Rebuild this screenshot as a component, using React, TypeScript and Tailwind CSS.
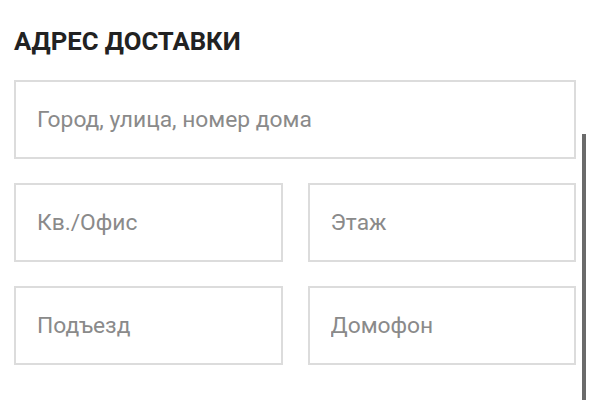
import React from 'react';

function Field({ placeholder }: { placeholder: string }) {
  return (
    <input
      type="text"
      placeholder={placeholder}
      className="h-[79px] w-full border-2 border-[#dcdcdc] bg-white px-[21px] text-[22.8px] text-[#333] outline-none placeholder:text-[#8a8a8a]"
    />
  );
}

export default function App() {
  return (
    <div
      className="relative h-[400px] w-[589px] overflow-hidden bg-white"
      style={{ fontFamily: 'Roboto, "Noto Sans", sans-serif' }}
    >
      <div className="flex flex-col pl-[14px] pr-[13px] pt-[24px]">
        <div className="text-[25.7px] font-bold leading-[34px] text-[#222]">АДРЕС ДОСТАВКИ</div>

        <div className="mt-[22px] flex flex-col gap-[24px]">
          <Field placeholder="Город, улица, номер дома" />
          <div className="grid grid-cols-2 gap-[25px]">
            <Field placeholder="Кв./Офис" />
            <Field placeholder="Этаж" />
          </div>
          <div className="grid grid-cols-2 gap-[25px]">
            <Field placeholder="Подъезд" />
            <Field placeholder="Домофон" />
          </div>
        </div>
      </div>

      {/* scrollbar thumb */}
      <div className="absolute right-[3px] top-[134px] h-[266px] w-[4px] bg-[#6b6b6b]" />
    </div>
  );
}
